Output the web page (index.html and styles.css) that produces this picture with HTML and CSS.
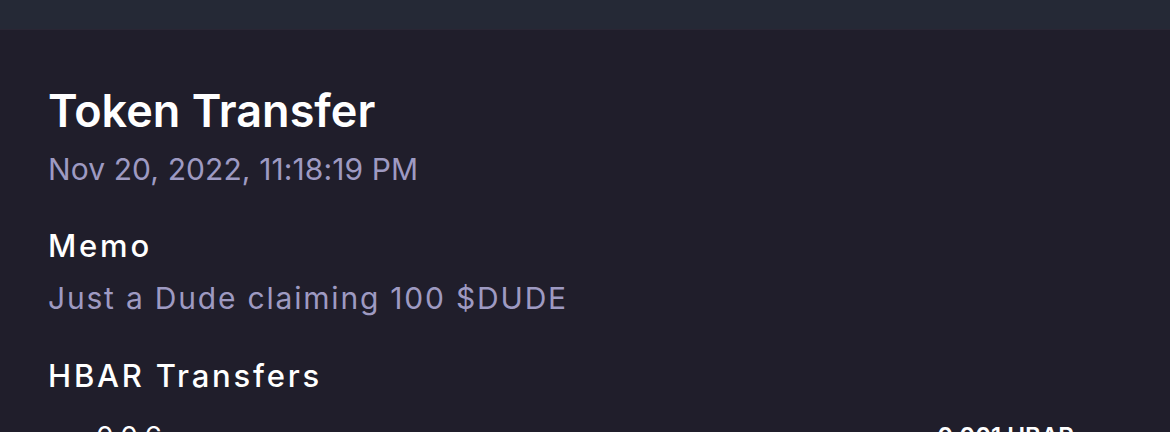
FILE: index.html
```html
<!DOCTYPE html>
<html>
<head>
<meta charset="utf-8">
<link rel="stylesheet" href="styles.css">
</head>
<body>
<div class="topbar"></div>
<main class="content">
  <h1 class="title">Token Transfer</h1>
  <div class="sub date">Nov 20, 2022, 11:18:19 PM</div>
  <h2 class="label memo-label">Memo</h2>
  <div class="sub memo">Just a Dude claiming 100 $DUDE</div>
  <h2 class="label hbar-label">HBAR Transfers</h2>
  <div class="transfer-row">
    <span class="account">0.0.6</span>
    <span class="amount">0.001 HBAR</span>
  </div>
</main>
</body>
</html>
```

FILE: styles.css
```css
html, body {
  margin: 0;
  padding: 0;
  background: #201e2b;
  height: 432px;
  overflow: hidden;
}
body {
  font-family: Inter, "Open Sans", "Liberation Sans", sans-serif;
  color: #ffffff;
}
.topbar {
  height: 29px;
  background: #252936;
  border-bottom: 1px solid #2a2634;
}
.content {
  padding: 53px 96px 0 48px;
}
.title {
  margin: 0;
  font-size: 45px;
  line-height: 56px;
  font-weight: 600;
}
.sub {
  font-size: 30px;
  line-height: 40px;
  color: #9e9ac2;
  font-weight: 400;
}
.date {
  margin-top: 10px;
  letter-spacing: 0.1px;
}
.memo {
  margin-top: 12px;
  letter-spacing: 1.8px;
}
.label {
  margin: 0;
  font-size: 31px;
  line-height: 40px;
  font-weight: 500;
  letter-spacing: 2.8px;
  color: #ffffff;
}
.memo-label {
  margin-top: 37px;
}
.hbar-label {
  margin-top: 38px;
}
.transfer-row {
  margin-top: 21px;
  display: flex;
  justify-content: space-between;
  font-size: 28px;
  line-height: 40px;
}
.account {
  margin-left: 48px;
  color: #ffffff;
}
.amount {
  font-size: 24px;
  font-weight: 600;
  color: #ffffff;
}
```
